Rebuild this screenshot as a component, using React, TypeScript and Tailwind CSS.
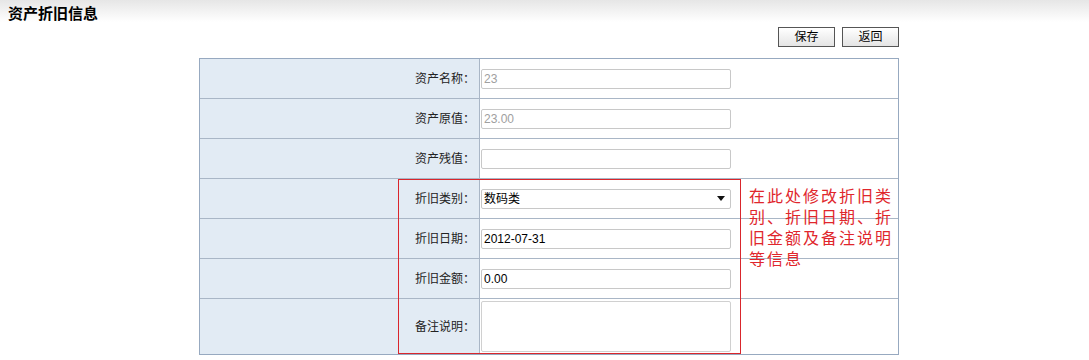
import { useState } from "react"

const font = { fontFamily: '"Liberation Sans", "Noto Sans CJK SC", sans-serif' }

function Row({ label, children, tall }: { label: string; children: React.ReactNode; tall?: boolean }) {
    return (
        <div className={`flex ${tall ? "h-[55px]" : "h-[40px] border-b border-[#a9b6c6]"}`}>
            <div className="w-[280px] shrink-0 bg-[#e2ebf4] border-r border-[#a9b6c6] flex items-center justify-end pr-[4px] text-[12px] text-[#222]">
                {label}
            </div>
            <div className="flex-1 flex items-center pl-[1px]">{children}</div>
        </div>
    )
}

function TextInput({ value, disabled }: { value: string; disabled?: boolean }) {
    return (
        <input
            type="text"
            defaultValue={value}
            disabled={disabled}
            className={`w-[250px] h-[20px] border border-[#c8c8c8] rounded-[2px] bg-white px-[2px] text-[12px] outline-none ${disabled ? "text-[#a0a0a0]" : "text-black"}`}
        />
    )
}

export default function App() {
    // 折旧类别
    const [leibie] = useState("数码类")

    return (
        <div className="w-[1089px] h-[360px] bg-white overflow-hidden" style={font}>
            <div className="h-[22px] bg-gradient-to-b from-[#e6e6e6] to-white pl-[8px] pt-[2px]">
                <span className="text-[15px] font-bold text-black leading-[18px]">资产折旧信息</span>
            </div>

            <div className="ml-[199px] w-[700px]">
                <div className="flex justify-end gap-[7px] pt-[5px] h-[36px]">
                    <button className="w-[57px] h-[20px] border border-[#555] bg-gradient-to-b from-white to-[#e4e4e4] text-[12px] text-black leading-none">保存</button>
                    <button className="w-[57px] h-[20px] border border-[#555] bg-gradient-to-b from-white to-[#e4e4e4] text-[12px] text-black leading-none">返回</button>
                </div>

                <div className="relative border border-[#97a9c0]">
                    <Row label="资产名称：">
                        <TextInput value="23" disabled />
                    </Row>
                    <Row label="资产原值：">
                        <TextInput value="23.00" disabled />
                    </Row>
                    <Row label="资产残值：">
                        <TextInput value="" />
                    </Row>
                    <Row label="折旧类别：">
                        <div className="w-[250px] h-[20px] border border-[#c8c8c8] rounded-[2px] bg-white flex items-center justify-between px-[2px] text-[12px] text-black">
                            <span>{leibie}</span>
                            <svg width="8" height="5" viewBox="0 0 8 5" className="mr-[3px]">
                                <path d="M0 0 H8 L4 5 Z" fill="#111" />
                            </svg>
                        </div>
                    </Row>
                    <Row label="折旧日期：">
                        <TextInput value="2012-07-31" />
                    </Row>
                    <Row label="折旧金额：">
                        <TextInput value="0.00" />
                    </Row>
                    <Row label="备注说明：" tall>
                        <textarea className="w-[250px] h-[51px] border border-[#d0d0d0] rounded-[2px] bg-white resize-none outline-none text-[12px]" />
                    </Row>

                    {/* 标注框 */}
                    <div className="absolute left-[198px] top-[120px] w-[343px] h-[175px] border border-[#d9262c] pointer-events-none" />
                    <div className="absolute left-[549px] top-[127px] w-[150px] text-[16px] leading-[21px] tracking-[2px] text-[#e0262c]">
                        在此处修改折旧类别、折旧日期、折旧金额及备注说明等信息
                    </div>
                </div>
            </div>
        </div>
    )
}
